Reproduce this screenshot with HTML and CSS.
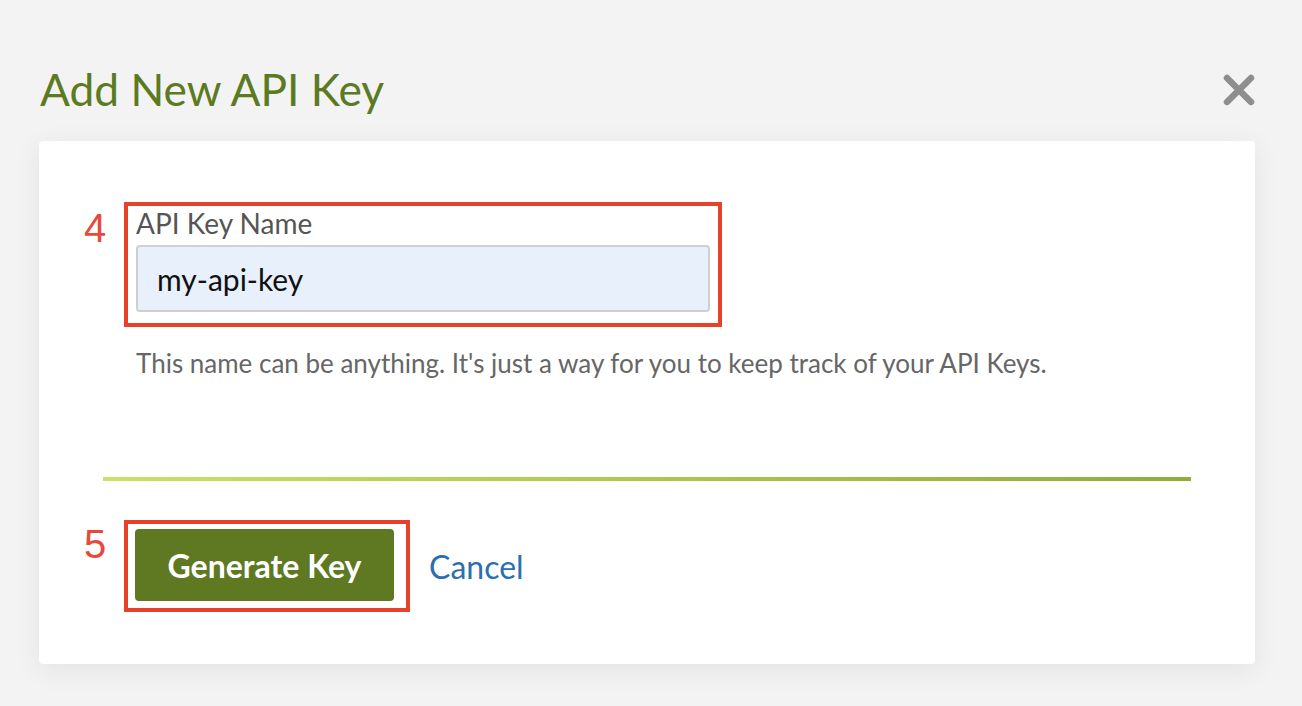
FILE: index.html
```html
<!DOCTYPE html>
<html lang="en">
<head>
<meta charset="utf-8">
<title>Add New API Key</title>
<link rel="stylesheet" href="styles.css">
</head>
<body>
<div class="page">
  <header class="header">
    <h1 class="title">Add New API Key</h1>
    <button class="close" aria-label="Close">
      <svg viewBox="0 0 32 32" width="32" height="32"><path d="M4 4 L28 28 M28 4 L4 28" stroke="#8e8e8e" stroke-width="6.5" stroke-linecap="round" fill="none"/></svg>
    </button>
  </header>
  <main class="card">
    <div class="step-row">
      <span class="step">4</span>
      <div class="highlight field-box">
        <label class="label" for="keyname">API Key Name</label>
        <input class="input" id="keyname" type="text" value="my-api-key">
      </div>
    </div>
    <p class="help">This name can be anything. It's just a way for you to keep track of your API Keys.</p>
    <div class="divider"></div>
    <div class="step-row actions">
      <span class="step">5</span>
      <div class="highlight btn-box">
        <button class="btn-primary">Generate Key</button>
      </div>
      <a class="cancel" href="#">Cancel</a>
    </div>
  </main>
</div>
</body>
</html>
```
FILE: styles.css
```css
* { box-sizing: border-box; }
html, body { margin: 0; padding: 0; }
body {
  background: #f3f3f3;
  font-family: Lato, "Open Sans", sans-serif;
  width: 1302px;
  height: 706px;
  overflow: hidden;
}
.page {
  padding: 67px 47px 0 39px;
}
.header {
  display: flex;
  justify-content: space-between;
  align-items: flex-start;
  height: 74px;
}
.title {
  margin: 0 0 0 1px;
  font-size: 44.3px;
  line-height: 44px;
  font-weight: 400;
  color: #5b7a22;
}
.close {
  margin-top: 7px;
  padding: 0;
  border: 0;
  background: none;
  width: 32px;
  height: 32px;
  display: block;
}
.close svg { display: block; }
.card {
  background: #fff;
  border-radius: 4px;
  box-shadow: 0 6px 28px rgba(0,0,0,0.07);
  padding: 61px 64px 51px 45px;
  height: 523px;
}
.step-row {
  display: flex;
  align-items: flex-start;
}
.step {
  width: 40px;
  font-family: "Liberation Sans", Arial, sans-serif;
  font-size: 40px;
  line-height: 40px;
  color: #e9483a;
  margin-top: 6px;
}
.highlight {
  border: 4px solid #e8412a;
}
.field-box {
  width: 598px;
  padding: 2px 8px 11px 8px;
}
.label {
  display: block;
  font-size: 28px;
  line-height: 30px;
  color: #555;
  margin-bottom: 7px;
}
.input {
  display: block;
  width: 574px;
  height: 67px;
  border: 2px solid #cfcfd2;
  border-radius: 4px;
  background: #e8f0fc;
  font-family: Lato, sans-serif;
  font-size: 30px;
  color: #111;
  padding: 0 19px;
}
.help {
  margin: 21px 0 0 52px;
  font-size: 26px;
  line-height: 30px;
  color: #666;
}
.divider {
  margin: 99px 0 0 19px;
  height: 4px;
  background: linear-gradient(90deg, #c8e263, #8fad3b);
}
.actions {
  margin-top: 39px;
  align-items: center;
}
.actions .step { align-self: flex-start; margin-top: 4px; }
.btn-box {
  padding: 5px 12px 7px 7px;
}
.btn-primary {
  display: block;
  width: 259px;
  height: 72px;
  border: 0;
  border-radius: 4px;
  background: #5e7922;
  color: #fff;
  font-family: Lato, sans-serif;
  font-weight: 700;
  font-size: 32px;
}
.cancel {
  margin-left: 19px;
  font-size: 32px;
  color: #2c6fae;
  text-decoration: none;
}
```
